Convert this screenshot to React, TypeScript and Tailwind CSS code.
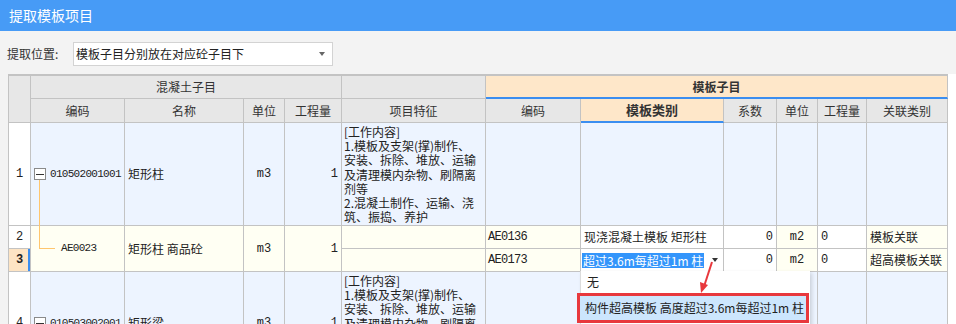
import React from "react";

const cjk = { fontFamily: '"Noto Sans CJK SC", "Noto Sans", sans-serif' };
const mono = { fontFamily: '"Liberation Mono", "Noto Sans CJK SC", monospace' };

const cell = "border-r border-b border-[#c3c3c3] text-[12px] text-[#222] flex items-center overflow-hidden whitespace-nowrap";
const head = `${cell} justify-center bg-[#e7e7e7] text-[#333]`;
const blue = "bg-[#edf4ff]";
const yellow = "bg-[#fffff3]";

const features = [
  "[工作内容]",
  "1.模板及支架(撑)制作、",
  "安装、拆除、堆放、运输",
  "及清理模内杂物、刷隔离",
  "剂等",
  "2.混凝土制作、运输、浇",
  "筑、振捣、养护",
];

function Expander() {
  return (
    <span className="w-[12px] h-[12px] border border-[#8a8a8a] bg-white flex items-center justify-center shrink-0">
      <span className="w-[8px] h-px bg-[#333]" />
    </span>
  );
}

function Features({ tint }: { tint: string }) {
  return (
    <div className={`border-r border-b border-[#c3c3c3] text-[12px] text-[#222] overflow-hidden pl-[2px] pt-[2px] leading-[14.2px] ${tint}`}>
      {features.map((l) => (
        <div key={l}>{l}</div>
      ))}
    </div>
  );
}

function ParentRow({ n, code, name }: { n: string; code: string; name: string }) {
  return (
    <>
      <div className={`${cell} justify-center bg-white`} style={mono}>{n}</div>
      <div className={`${cell} ${blue} pl-[3px] gap-[4px]`}>
        <Expander />
        <span style={mono} className="text-[11px] tracking-[-0.7px]">{code}</span>
      </div>
      <div className={`${cell} ${blue} pl-[3px]`}>{name}</div>
      <div className={`${cell} ${blue} justify-center text-[11px]`} style={mono}>m3</div>
      <div className={`${cell} ${blue} justify-end pr-[3px] text-[11px]`} style={mono}>1</div>
      <Features tint={blue} />
      <div className={`${cell} ${blue}`} />
      <div className={`${cell} ${blue}`} />
      <div className={`${cell} ${blue}`} />
      <div className={`${cell} ${blue}`} />
      <div className={`${cell} ${blue}`} />
      <div className={`${cell} ${blue}`} />
    </>
  );
}

function TemplateRow({ n, code, kind, link, active }: { n: string; code: string; kind?: string; link: string; active?: boolean }) {
  return (
    <>
      <div
        className={`${cell} justify-center ${active ? "bg-[#fde4c4] font-bold shadow-[inset_-2px_0_0_#3b8ef0]" : "bg-white"}`}
        style={mono}
      >
        {n}
      </div>
      {n === "2" && (
        <>
          <div className={`${cell} ${yellow} row-span-2 relative`}>
            <span style={mono} className="text-[11px] tracking-[-0.7px] pl-[30px]">AE0023</span>
          </div>
          <div className={`${cell} ${yellow} row-span-2 pl-[3px]`}>矩形柱 商品砼</div>
          <div className={`${cell} ${yellow} row-span-2 justify-center text-[11px]`} style={mono}>m3</div>
          <div className={`${cell} ${yellow} row-span-2 justify-end pr-[3px] text-[11px]`} style={mono}>1</div>
        </>
      )}
      <div className={`${cell} ${yellow}`} />
      <div className={`${cell} ${yellow} pl-[2px] text-[11px] tracking-[-0.7px]`} style={mono}>{code}</div>
      {active ? (
        <div className={`${cell} bg-white relative pl-[1px]`}>
          <span className="absolute -left-px -top-px -right-px -bottom-px border border-[#3b8ef0]" />
          <span className="bg-[#3395fb] text-white leading-[15px] px-px">超过3.6m每超过1m 柱</span>
          <span className="ml-[8px] w-0 h-0 border-l-[3.5px] border-r-[3.5px] border-t-[4px] border-l-transparent border-r-transparent border-t-[#333]" />
        </div>
      ) : (
        <div className={`${cell} bg-white pl-[3px]`}>{kind}</div>
      )}
      <div className={`${cell} bg-white justify-end pr-[3px] text-[11px]`} style={mono}>0</div>
      <div className={`${cell} ${yellow} justify-center text-[11px]`} style={mono}>m2</div>
      <div className={`${cell} bg-white pl-[3px] text-[11px]`} style={mono}>0</div>
      <div className={`${cell} ${yellow} pl-[3px]`}>{link}</div>
    </>
  );
}

export default function App() {
  return (
    <div className="w-[956px] h-[324px] overflow-hidden bg-white relative" style={cjk}>
      {/* title */}
      <div className="h-[31px] bg-[#479bf6] flex items-center pl-[9px] text-white text-[14px]">提取模板项目</div>

      {/* options */}
      <div className="h-[43px] bg-[#f3f3f3] flex items-start pl-[7px] pt-[11px]">
        <span className="text-[12px] text-[#333] leading-[24px] w-[66px]">提取位置:</span>
        <div className="w-[260px] h-[24px] bg-white border border-[#d3d3d3] flex items-center pl-[2px] pr-[7px] text-[12px] text-[#222]">
          <span className="flex-1">模板子目分别放在对应砼子目下</span>
          <span className="w-0 h-0 border-l-[3.5px] border-r-[3.5px] border-t-[4px] border-l-transparent border-r-transparent border-t-[#666]" />
        </div>
      </div>

      {/* grid */}
      <div className="flex">
        <div className="w-[8px] bg-[#f3f3f3] shrink-0" />
        <div className="grid grid-cols-[22px_94px_119px_41px_57px_144px_95px_143px_53px_41px_49px_81px] grid-rows-[23px_24px_103px_23px_23px_103px] border-t-2 border-l border-[#c3c3c3] bg-white">
          <div className={`${head} row-span-2`} />
          <div className={`${head} col-span-4`}>混凝土子目</div>
          <div className={head} />
          <div className={`${head} col-span-6 !bg-[#fee7c9] font-bold !border-b-2 !border-b-[#3b8ef0]`}>模板子目</div>

          <div className={head}>编码</div>
          <div className={head}>名称</div>
          <div className={head}>单位</div>
          <div className={head}>工程量</div>
          <div className={head}>项目特征</div>
          <div className={head}>编码</div>
          <div className={`${head} !bg-[#fee7c9] font-bold text-[13px] !border-b-2 !border-b-[#3b8ef0]`}>模板类别</div>
          <div className={head}>系数</div>
          <div className={head}>单位</div>
          <div className={head}>工程量</div>
          <div className={head}>关联类别</div>

          <ParentRow n="1" code="010502001001" name="矩形柱" />
          <TemplateRow n="2" code="AE0136" kind="现浇混凝土模板 矩形柱" link="模板关联" />
          <TemplateRow n="3" code="AE0173" link="超高模板关联" active />
          <ParentRow n="4" code="010503002001" name="矩形梁" />
        </div>
        <div className="flex-1 bg-white" />
      </div>

      {/* tree connector */}
      <div className="absolute left-[39px] top-[180px] w-[16px] h-[69px] border-l border-b border-[#ffc66e]" />

      {/* dropdown list */}
      <div className="absolute left-[580px] top-[271px] w-[230px] h-[60px] bg-white border-l border-[#dcdcdc] shadow-[2px_2px_4px_rgba(0,0,0,0.15)]">
        <div className="h-[22px] flex items-center pl-[6px] text-[12px] text-[#222]">无</div>
        <div className="-ml-[4px] w-[232px] h-[30px] border-[3px] border-[#e8383d] bg-[#cce6fd] flex items-center pl-[5px] text-[12px] text-[#222] whitespace-nowrap">
          构件超高模板 高度超过3.6m每超过1m 柱
        </div>
      </div>

      {/* red arrow */}
      <svg className="absolute left-[694px] top-[258px]" width="24" height="40" viewBox="0 0 24 40">
        <line x1="18" y1="4" x2="10.5" y2="27" stroke="#e8383d" strokeWidth="2" />
        <polygon points="6,24 14,27 7,35" fill="#e8383d" />
      </svg>
    </div>
  );
}
